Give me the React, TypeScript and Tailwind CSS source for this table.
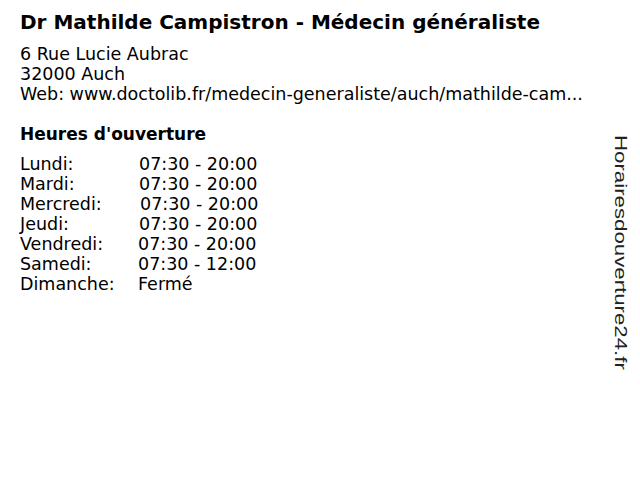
const hours = [
  { day: "Lundi:", time: "07:30 - 20:00", pad: "pl-[1px]" },
  { day: "Mardi:", time: "07:30 - 20:00", pad: "pl-[1px]" },
  { day: "Mercredi:", time: "07:30 - 20:00", pad: "pl-[2px]" },
  { day: "Jeudi:", time: "07:30 - 20:00", pad: "pl-[1px]" },
  { day: "Vendredi:", time: "07:30 - 20:00", pad: "pl-0" },
  { day: "Samedi:", time: "07:30 - 12:00", pad: "pl-0" },
  { day: "Dimanche:", time: "Fermé", pad: "pl-0" },
];

function App() {
  return (
    <div className="w-[640px] h-[480px] overflow-hidden bg-white flex text-black font-['DejaVu_Sans',sans-serif]">
      <div className="flex-1 flex flex-col pl-5 pt-[8px]">
        <h1 className="text-[20px] font-bold leading-[28px]">
          Dr Mathilde Campistron - Médecin généraliste
        </h1>
        <div className="mt-[8px] text-[17.5px] leading-[20px]">
          <div>6 Rue Lucie Aubrac</div>
          <div>32000 Auch</div>
          <div>Web: www.doctolib.fr/medecin-generaliste/auch/mathilde-cam...</div>
        </div>
        <h2 className="mt-[20px] text-[17px] font-bold leading-[20px]">Heures d'ouverture</h2>
        <div className="mt-[10px] text-[17.5px] leading-[20px]">
          {hours.map((h) => (
            <div key={h.day} className="flex">
              <span className="w-[118px] shrink-0">{h.day}</span>
              <span className={h.pad}>{h.time}</span>
            </div>
          ))}
        </div>
      </div>
      <div className="w-[40px] flex justify-center items-start pt-[135px]">
        <span className="[writing-mode:vertical-rl] text-[16px] leading-[20px] origin-top scale-y-[1.39] font-['Liberation_Sans',sans-serif] text-[#222]">
          Horairesdouverture24.fr
        </span>
      </div>
    </div>
  );
}

export default App;
